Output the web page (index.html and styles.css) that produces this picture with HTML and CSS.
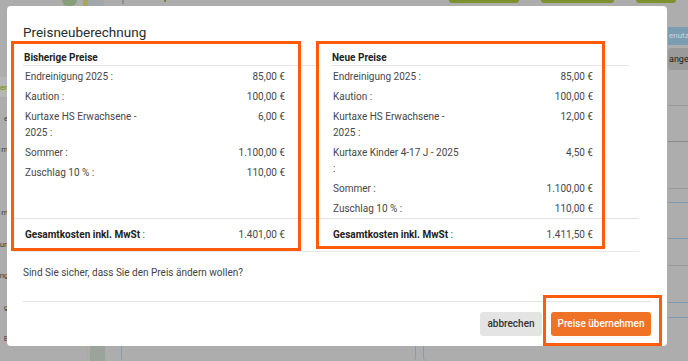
FILE: index.html
```html
<!DOCTYPE html>
<html lang="de">
<head>
<meta charset="utf-8">
<title>Preisneuberechnung</title>
<link rel="stylesheet" href="styles.css">
</head>
<body>
<div class="page">
  <aside class="side">
    <div class="side-item active">en</div>
    <div class="side-item">e</div>
    <div class="side-item">m</div>
    <div class="side-item"></div>
    <div class="side-item">m</div>
    <div class="side-item">un</div>
    <div class="side-item">ng</div>
    <div class="side-item">g</div>
    <div class="side-item">E</div>
  </aside>
  <main class="main">
    <div class="topbar">
      <span class="blk b-green"></span>
      <span class="blk b-yellow"></span>
      <span class="blk b-grey"></span>
      <span class="circle"></span>
      <span class="dot"></span>
      <span class="pill p1"></span>
      <span class="pill p2"></span>
      <span class="pill p3"></span>
    </div>
    <div class="bottombar">
      <span class="vline"></span>
      <span class="vblock"></span>
      <span class="brace b1"></span>
      <span class="brace b2"></span>
      <span class="brace b3"></span>
    </div>
  </main>
  <aside class="right">
    <div class="r-head">enutz</div>
    <div class="r-tag">ange</div>
    <div class="r-line l1"></div>
    <div class="r-line l2 dark"></div>
    <div class="r-line l3"></div>
    <div class="r-line l4 blue"></div>
    <div class="r-line l5 blue"></div>
    <div class="r-line l6"></div>
    <div class="r-line l7 blue"></div>
    <div class="r-line l8 blue"></div>
  </aside>
</div>

<div class="modal">
  <h2 class="title">Preisneuberechnung</h2>
  <div class="cols">
    <section class="col">
      <div class="col-head">Bisherige Preise</div>
      <div class="row"><span class="lbl">Endreinigung 2025 :</span><span class="val">85,00 €</span></div>
      <div class="row"><span class="lbl">Kaution :</span><span class="val">100,00 €</span></div>
      <div class="row"><span class="lbl">Kurtaxe HS Erwachsene - 2025 :</span><span class="val">6,00 €</span></div>
      <div class="row"><span class="lbl">Sommer :</span><span class="val">1.100,00 €</span></div>
      <div class="row"><span class="lbl">Zuschlag 10 % :</span><span class="val">110,00 €</span></div>
    </section>
    <section class="col">
      <div class="col-head">Neue Preise</div>
      <div class="row"><span class="lbl">Endreinigung 2025 :</span><span class="val">85,00 €</span></div>
      <div class="row"><span class="lbl">Kaution :</span><span class="val">100,00 €</span></div>
      <div class="row"><span class="lbl">Kurtaxe HS Erwachsene - 2025 :</span><span class="val">12,00 €</span></div>
      <div class="row"><span class="lbl">Kurtaxe Kinder 4-17 J - 2025 :</span><span class="val">4,50 €</span></div>
      <div class="row"><span class="lbl">Sommer :</span><span class="val">1.100,00 €</span></div>
      <div class="row"><span class="lbl">Zuschlag 10 % :</span><span class="val">110,00 €</span></div>
    </section>
  </div>
  <div class="totals">
    <div class="total"><span><b>Gesamtkosten inkl. MwSt</b> :</span><span class="val">1.401,00 €</span></div>
    <div class="total"><span><b>Gesamtkosten inkl. MwSt</b> :</span><span class="val">1.411,50 €</span></div>
  </div>
  <p class="question">Sind Sie sicher, dass Sie den Preis ändern wollen?</p>
  <div class="footer">
    <button class="btn btn-cancel" type="button">abbrechen</button>
    <button class="btn btn-ok" type="button">Preise übernehmen</button>
  </div>
</div>

<div class="mark mark-old"></div>
<div class="mark mark-new"></div>
<div class="mark mark-btn"></div>
</body>
</html>
```

FILE: styles.css
```css
* { box-sizing: border-box; }
html, body { margin: 0; padding: 0; }
body {
  width: 688px;
  height: 361px;
  overflow: hidden;
  position: relative;
  background: #adadad;
  font-family: Roboto, "Liberation Sans", Arial, sans-serif;
  color: #444;
}

/* ---------- dimmed page behind the dialog ---------- */
.page {
  display: grid;
  grid-template-columns: 8px 660px 20px;
  height: 361px;
}
.side {
  padding-top: 71px;
  display: flex;
  flex-direction: column;
  overflow: hidden;
  font-size: 8px;
  letter-spacing: -0.3px;
  color: #3d3d3d;
}
.side-item {
  height: 31.5px;
  flex: none;
  display: flex;
  align-items: center;
  justify-content: flex-end;
  white-space: nowrap;
}
.side-item.active {
  color: #6a8a22;
  background: #b6b6b6;
  height: 20px;
  margin: 6px 0 5.5px;
}

.main {
  display: flex;
  flex-direction: column;
  justify-content: space-between;
  margin-left: -8px;
}
.topbar {
  position: relative;
  height: 6px;
  display: flex;
  align-items: flex-start;
}
.blk { height: 6px; flex: none; }
.b-green { width: 15px; margin-left: 62px; background: #86a07a; border-radius: 0 0 8px 8px; }
.b-yellow { width: 5px; margin-left: 6px; background: #a8a84e; }
.b-grey { width: 16px; background: #a2a6ad; }
.circle {
  width: 23px; height: 4px; margin-left: 18px;
  border: 1px solid #8f8f8f; border-top: none;
  border-radius: 0 0 12px 12px; background: #b8b8b8;
}
.dot { width: 5px; height: 2px; margin-left: 40px; border: 1px solid #6f8a2a; border-top: none; border-radius: 0 0 3px 3px; }
.pill { height: 3px; background: #7d922f; border-radius: 0 0 8px 8px; flex: none; }
.p1 { width: 70px; margin-left: 283px; }
.p2 { width: 73px; margin-left: 22px; }
.p3 { width: 40px; margin-left: 22px; }

.bottombar {
  height: 15px;
  display: flex;
  align-items: stretch;
}
.vline { width: 1px; margin-left: 87px; background: #b1b07a; }
.vblock { width: 15px; margin-left: 2px; background: #9ba49b; }
.brace { width: 4px; border-left: 1px solid #7f9fb3; border-radius: 0 0 0 4px; margin-left: 16px; }
.b2 { margin-left: 287px; border-left: none; border-right: 1px solid #7f9fb3; border-radius: 0 0 4px 0; }
.b3 { margin-left: 7px; }

.right {
  padding-top: 27px;
  display: flex;
  flex-direction: column;
  overflow: hidden;
  white-space: nowrap;
}
.r-head {
  height: 18px; line-height: 18px;
  background: #7a9db1; color: #c9d7df;
  font-size: 8px;
  padding-left: 1px;
}
.r-tag {
  height: 22px; line-height: 22px; margin-top: 3px;
  background: #9a9a9a; color: #1e1e1e; border-radius: 3px 0 0 3px;
  padding-left: 1px; font-size: 9px;
}
.r-line { height: 1px; flex: none; background: #999; }
.r-line.dark { background: #8a8a8a; }
.r-line.blue { background: #7d9cb1; }
.l1 { margin-top: 35px; }
.l2 { margin-top: 35px; }
.l3 { margin-top: 46px; }
.l4 { margin-top: 13px; }
.l5 { margin-top: 35px; }
.l6 { margin-top: 26px; }
.l7 { margin-top: 36px; }
.l8 { margin-top: 14px; }

/* ---------- dialog ---------- */
.modal {
  position: absolute;
  left: 7px;
  top: 6px;
  width: 660px;
  background: #fff;
  border-radius: 4px;
  padding: 16px 16px 10px 16px;
}
.title {
  margin: 0;
  font-size: 13.5px;
  font-weight: 400;
  line-height: 20px;
  color: #2b2b2b;
}
.cols {
  margin-top: 6px;
  display: grid;
  grid-template-columns: 298px 298px;
  column-gap: 10px;
  align-items: start;
}
.col-head {
  font-size: 10px;
  font-weight: 700;
  line-height: 13px;
  padding: 3px 0 1px 1px;
  color: #222;
  border-bottom: 1px solid #e4e4e4;
}
.row {
  display: grid;
  grid-template-columns: 130px 1fr;
  font-size: 10px;
  line-height: 16px;
  padding: 3px 36px 1px 2px;
  color: #474747;
}
.val { text-align: right; }

.totals {
  margin-left: -10px;
  width: 626px;
  padding-left: 10px;
  display: grid;
  grid-template-columns: 298px 298px;
  column-gap: 10px;
  border-top: 1px solid #e2e2e2;
  border-bottom: 1px solid #e8e8e8;
}
.total {
  display: flex;
  justify-content: space-between;
  font-size: 10px;
  line-height: 16px;
  padding: 8px 36px 8px 2px;
  color: #474747;
}
.total b { color: #222; font-weight: 700; }

.question {
  margin: 13px 0 0 0;
  font-size: 10px;
  line-height: 16px;
  color: #444;
  padding-bottom: 20px;
  border-bottom: 1px solid #e4e4e4;
}
.footer {
  margin-top: 10px;
  display: flex;
  justify-content: flex-end;
  gap: 9px;
}
.btn {
  height: 24px;
  border: none;
  border-radius: 3px;
  font-family: Roboto, "Liberation Sans", Arial, sans-serif;
  font-size: 10px;
  font-weight: 500;
  padding: 0;
  text-align: center;
  line-height: 24px;
}
.btn-cancel { width: 62px; background: #e4e4e4; color: #333; }
.btn-ok { width: 100px; background: #f07226; color: #fff; }

/* ---------- orange annotation frames ---------- */
.mark {
  position: absolute;
  border: 3px solid #ff5b0d;
}
.mark-old { left: 11px; top: 41px; width: 290px; height: 210px; }
.mark-new { left: 316px; top: 41px; width: 289px; height: 208px; }
.mark-btn { left: 543px; top: 295px; width: 119px; height: 51px; }
```
